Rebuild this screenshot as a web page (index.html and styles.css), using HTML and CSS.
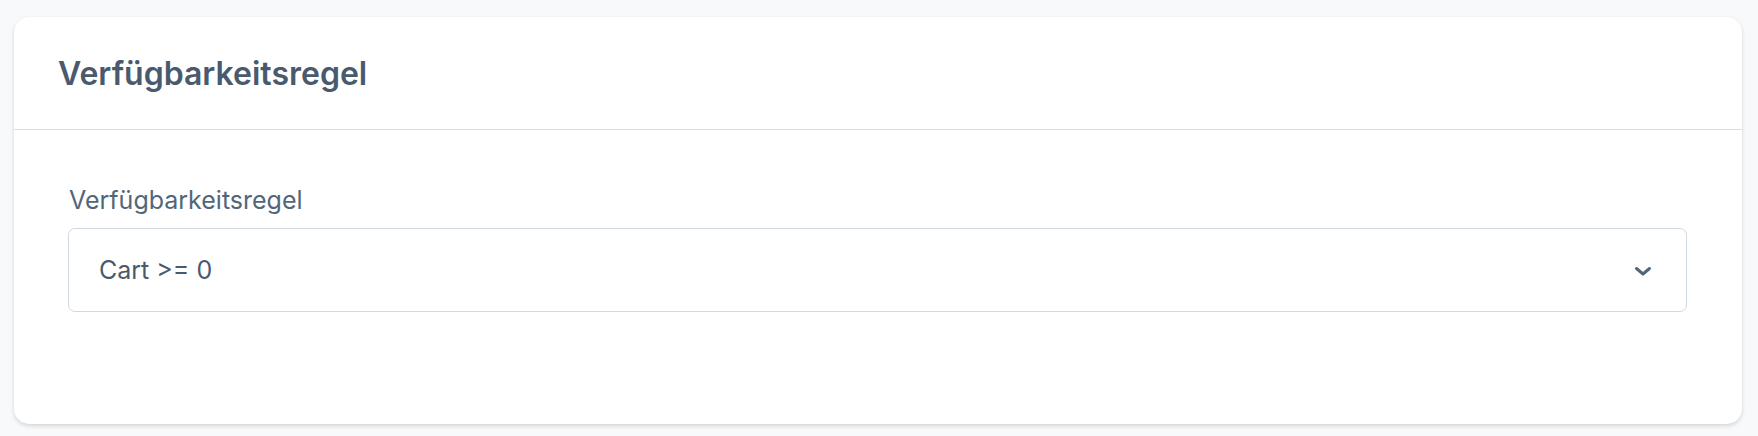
FILE: index.html
```html
<!DOCTYPE html>
<html lang="de">
<head>
<meta charset="utf-8">
<title>Verfügbarkeitsregel</title>
<link rel="stylesheet" href="styles.css">
</head>
<body>
<div class="page">
  <section class="card">
    <header class="card-header">
      <h2 class="card-title">Verfügbarkeitsregel</h2>
    </header>
    <div class="card-body">
      <label class="field-label">Verfügbarkeitsregel</label>
      <div class="select">
        <span class="select-value">Cart &gt;= 0</span>
        <svg class="chevron" width="18" height="12" viewBox="0 0 18 12" aria-hidden="true">
          <path d="M2.5 4.5 L9 10 L15.5 4.5" fill="none" stroke="#52667a" stroke-width="3" stroke-linecap="round" stroke-linejoin="round"/>
        </svg>
      </div>
    </div>
  </section>
</div>
</body>
</html>
```

FILE: styles.css
```css
html, body {
  margin: 0;
  padding: 0;
  background: #f8f9fb;
}
body {
  font-family: Inter, "Noto Sans", "Liberation Sans", sans-serif;
  color: #52667a;
}
.page {
  padding: 17px 16px 12px 14px;
}
.card {
  background: #ffffff;
  border-radius: 15px;
  box-shadow: 0 2px 4px rgba(0, 0, 0, 0.14), 0 0 1px rgba(0, 0, 0, 0.06);
  height: 407px;
  display: flex;
  flex-direction: column;
  box-sizing: border-box;
}
.card-header {
  height: 113px;
  box-sizing: border-box;
  border-bottom: 1px solid #d8dde4;
  display: flex;
  align-items: center;
  padding: 0 44px;
}
.card-title {
  margin: 0;
  font-size: 32px;
  font-weight: 600;
  color: #4a5a6e;
  letter-spacing: 0;
}
.card-body {
  padding: 54px 55px 0 54px;
  display: flex;
  flex-direction: column;
}
.field-label {
  font-size: 25px;
  line-height: 32px;
  color: #52667a;
  padding-left: 1px;
  margin-bottom: 12px;
}
.select {
  height: 84px;
  box-sizing: border-box;
  border: 1px solid #d1d9e0;
  border-radius: 7px;
  display: flex;
  align-items: center;
  justify-content: space-between;
  padding: 0 34px 0 30px;
}
.select-value {
  font-size: 25px;
  color: #4a5a6e;
}
.chevron {
  display: block;
}
```
